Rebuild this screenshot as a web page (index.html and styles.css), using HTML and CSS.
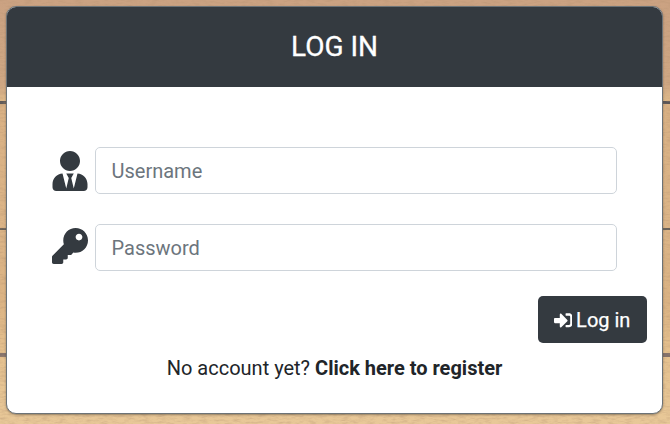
FILE: index.html
```
<!DOCTYPE html>
<html lang="en">
<head>
<meta charset="utf-8">
<title>Log in</title>
<link rel="stylesheet" href="styles.css">
</head>
<body>
<svg class="grain" aria-hidden="true">
  <filter id="wood" x="0" y="0" width="100%" height="100%">
    <feTurbulence type="fractalNoise" baseFrequency="0.12 0.5" numOctaves="3" seed="4"/>
    <feColorMatrix values="0 0 0 0 0.45  0 0 0 0 0.28  0 0 0 0 0.16  0.8 0 0 0 -0.33"/>
  </filter>
  <rect width="100%" height="100%" filter="url(#wood)"/>
</svg>
<main class="card">
  <header class="card-header"><h1>LOG IN</h1></header>
  <form class="card-body">
    <div class="field">
      <svg class="icon user" viewBox="0 0 448 512"><path d="M224 256c70.7 0 128-57.3 128-128S294.7 0 224 0 96 57.3 96 128s57.3 128 128 128zm95.8 32.6L272 480l-32-136 32-56h-96l32 56-32 136-47.8-191.4C56.9 292 0 350.3 0 422.4V464c0 26.5 21.5 48 48 48h352c26.5 0 48-21.5 48-48v-41.6c0-72.1-56.9-130.4-128.2-133.8z"/></svg>
      <input type="text" placeholder="Username">
    </div>
    <div class="field">
      <svg class="icon key" viewBox="0 0 512 512"><path d="M512 176.001C512 273.203 433.202 352 336 352c-11.22 0-22.19-1.062-32.827-3.069l-24.012 27.014A23.999 23.999 0 0 1 261.223 384H224v40c0 13.255-10.745 24-24 24h-40v40c0 13.255-10.745 24-24 24H24c-13.255 0-24-10.745-24-24v-78.059c0-6.365 2.529-12.47 7.029-16.971l161.802-161.802C163.108 213.814 160 195.271 160 176 160 78.798 238.797.001 335.999 0 433.488-.001 512 78.511 512 176.001zM336 128c0 26.51 21.49 48 48 48s48-21.49 48-48-21.49-48-48-48-48 21.49-48 48z"/></svg>
      <input type="password" placeholder="Password">
    </div>
    <button class="submit" type="button">
      <svg class="sign-in" viewBox="0 0 512 512"><path d="M416 448h-84c-6.6 0-12-5.4-12-12v-40c0-6.6 5.4-12 12-12h84c17.7 0 32-14.3 32-32V160c0-17.7-14.3-32-32-32h-84c-6.6 0-12-5.4-12-12V76c0-6.6 5.4-12 12-12h84c53 0 96 43 96 96v192c0 53-43 96-96 96zm-47-201L201 79c-15-15-41-4.5-41 17v96H24c-13.3 0-24 10.7-24 24v96c0 13.3 10.7 24 24 24h136v96c0 21.5 26 32 41 17l168-168c9.3-9.4 9.3-24.6 0-34z"/></svg>
      <span>Log in</span>
    </button>
    <p class="register">No account yet? <a>Click here to register</a></p>
  </form>
</main>
</body>
</html>
```
FILE: styles.css
```
* { box-sizing: border-box; }

body {
  margin: 0;
  height: 424px;
  padding: 6px 7px 10px 6px;
  overflow: hidden;
  font-family: Roboto, sans-serif;
  font-size: 20px;
  line-height: 30px;
  color: #212529;
  background:
    linear-gradient(#5a5657, #5a5657) 0 101px / 100% 3px no-repeat,
    linear-gradient(#655f58, #655f58) 0 228px / 100% 2px no-repeat,
    linear-gradient(#82716b, #82716b) 0 353px / 100% 4px no-repeat,
    linear-gradient(#cba282 0, #cfa783 85px, #e0bb8a 101px, #d9b184 104px, #dcb587 228px, #dbb383 300px, #e5c18e 353px, #e8c898 424px);
}

.grain {
  position: absolute;
  inset: 0;
  width: 100%;
  height: 100%;
}

.card {
  position: relative;
  height: 408px;
  border: 1px solid #6c7377;
  border-radius: 10px;
  overflow: hidden;
  background: #fff;
  box-shadow: 0 1px 2px rgba(70, 60, 50, .5);
}

.card-header {
  display: flex;
  align-items: center;
  justify-content: center;
  height: 80px;
  background: #343a40;
  color: #fff;
}

h1 {
  margin: 0;
  font-size: 28px;
  font-weight: 400;
  line-height: 34px;
  -webkit-text-stroke: .3px;
}

.card-body {
  display: flex;
  flex-direction: column;
  padding: 60px 15px 0 45px;
}

.field {
  display: flex;
  align-items: flex-start;
  gap: 7px;
  margin: 0 30px 30px 0;
}

.icon { flex: none; width: 36px; fill: #343a40; }
.user { height: 40px; margin-top: 4px; }
.key { height: 36px; margin-top: 4px; }

input {
  flex: 1;
  min-width: 0;
  height: 47px;
  padding: 0 15px 0 15.5px;
  border: 1px solid #ced4da;
  border-radius: 5px;
  background: #fff;
  font: inherit;
}

input::placeholder { color: #6c757d; opacity: 1; }

.submit {
  display: flex;
  align-items: center;
  justify-content: center;
  gap: 4px;
  align-self: flex-end;
  width: 109px;
  height: 47px;
  margin-top: -5px;
  padding: 0 1px 0 0;
  border: 0;
  border-radius: 5px;
  background: #343a40;
  color: #fff;
  font: inherit;
  -webkit-text-stroke: .25px;
}

.sign-in { width: 18.5px; height: 18.5px; margin-top: 1px; fill: currentColor; stroke: none; }

.register {
  margin: 10px 30px 0 0;
  text-align: center;
}

.register a { font-weight: 700; }
```
